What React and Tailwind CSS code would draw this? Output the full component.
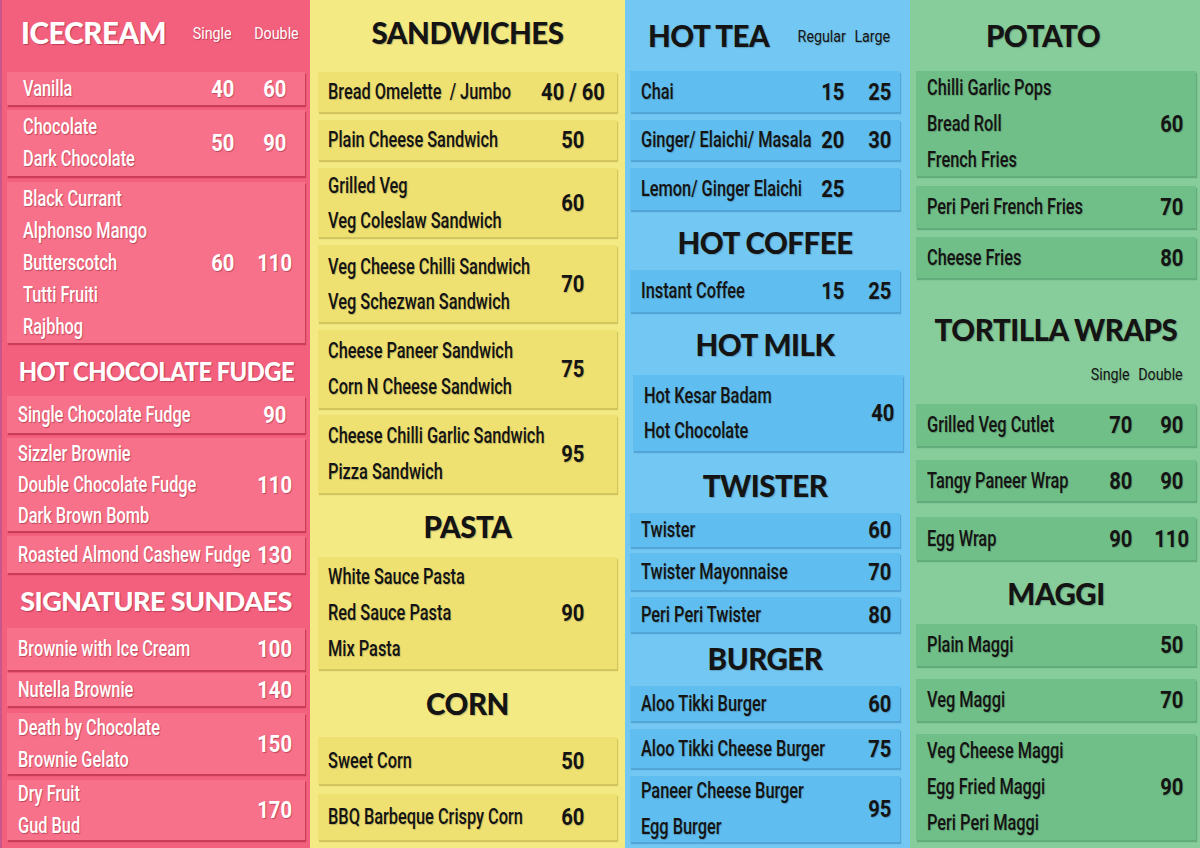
const NARROW = "font-['Roboto','Liberation_Sans',sans-serif]";
const SQUEEZE = 'scale-x-[0.84]';
const ITEM_SQUEEZE = 'scale-x-[0.76]';
const HEAD = "font-['Lato','Open_Sans',sans-serif] font-black";

const COLS = [
  {
    wrap: 'bg-[#f2607d] pl-[5px] pr-[5px] border-l-2 border-[#c8568a]',
    box: 'bg-[#f7718a] shadow-[1px_2px_1px_rgba(150,20,50,0.45)]',
    ink: 'text-white [text-shadow:1px_1px_1px_rgba(120,20,40,0.45)]',
    pl: 'pl-[11px]',
    prices: 'gap-[12px] pr-[10px]',
    cell: 'w-[40px]',
    items: [
      { kind: 'lead', title: 'ICECREAM', subs: ['Single', 'Double'], cls: 'h-[72px] pb-[6px] pl-[14px] pr-[1px]', subCls: 'gap-[8px]', subCell: 'w-[56px]' },
      { lines: ['Vanilla'], prices: ['40', '60'], cls: 'h-[33px]', pl: 'pl-[16px]' },
      { lines: ['Chocolate', 'Dark Chocolate'], prices: ['50', '90'], cls: 'mt-[5px] h-[66px]', pl: 'pl-[16px]' },
      { lines: ['Black Currant', 'Alphonso Mango', 'Butterscotch', 'Tutti Fruiti', 'Rajbhog'], prices: ['60', '110'], cls: 'mt-[6px] h-[161px]', pl: 'pl-[16px]' },
      { kind: 'head', title: 'HOT CHOCOLATE FUDGE', cls: 'h-[53px] pt-[3px]', size: 'text-[27px] tracking-[-0.6px] scale-x-[0.88]' },
      { lines: ['Single Chocolate Fudge'], prices: ['90'], cls: 'h-[37px]' },
      { lines: ['Sizzler Brownie', 'Double Chocolate Fudge', 'Dark Brown Bomb'], prices: ['110'], cls: 'mt-[5px] h-[93px]', lh: 'leading-[31px]' },
      { lines: ['Roasted Almond Cashew Fudge'], prices: ['130'], cls: 'mt-[5px] h-[37px]' },
      { kind: 'head', title: 'SIGNATURE SUNDAES', cls: 'h-[55px]', size: 'text-[27px] tracking-[-0.6px]' },
      { lines: ['Brownie with Ice Cream'], prices: ['100'], cls: 'h-[42px]' },
      { lines: ['Nutella Brownie'], prices: ['140'], cls: 'mt-[3px] h-[33px]' },
      { lines: ['Death by Chocolate', 'Brownie Gelato'], prices: ['150'], cls: 'mt-[7px] h-[61px]' },
      { lines: ['Dry Fruit', 'Gud Bud'], prices: ['170'], cls: 'mt-[6px] h-[60px]' },
    ],
  },
  {
    wrap: 'bg-[#f4ea84] px-[8px]',
    box: 'bg-[#eee172] shadow-[1px_2px_1px_rgba(150,130,20,0.35)]',
    ink: 'text-[#141414] [text-shadow:1px_1px_1px_rgba(0,0,0,0.2)]',
    pl: 'pl-[10px]',
    prices: 'pr-[9px]',
    cell: 'w-[70px]',
    items: [
      { kind: 'head', title: 'SANDWICHES', cls: 'h-[72px] pb-[6px]' },
      { lines: ['Bread Omelette\u00a0 / Jumbo'], prices: ['40 / 60'], cls: 'h-[40px]' },
      { lines: ['Plain Cheese Sandwich'], prices: ['50'], cls: 'mt-[8px] h-[40px]' },
      { lines: ['Grilled Veg', 'Veg Coleslaw Sandwich'], prices: ['60'], cls: 'mt-[8px] h-[69px]', lh: 'leading-[35px]' },
      { lines: ['Veg Cheese Chilli Sandwich', 'Veg Schezwan Sandwich'], prices: ['70'], cls: 'mt-[8px] h-[77px]', lh: 'leading-[35px]' },
      { lines: ['Cheese Paneer Sandwich', 'Corn N Cheese Sandwich'], prices: ['75'], cls: 'mt-[8px] h-[78px]', lh: 'leading-[36px]' },
      { lines: ['Cheese Chilli Garlic Sandwich', 'Pizza Sandwich'], prices: ['95'], cls: 'mt-[7px] h-[78px]', lh: 'leading-[36px]' },
      { kind: 'head', title: 'PASTA', cls: 'h-[64px] pt-[4px]' },
      { lines: ['White Sauce Pasta', 'Red Sauce Pasta', 'Mix Pasta'], prices: ['90'], cls: 'h-[112px]', lh: 'leading-[36px]' },
      { kind: 'head', title: 'CORN', cls: 'h-[68px] pt-[2px]' },
      { lines: ['Sweet Corn'], prices: ['50'], cls: 'h-[47px]' },
      { lines: ['BBQ Barbeque Crispy Corn'], prices: ['60'], cls: 'mt-[10px] h-[46px]' },
    ],
  },
  {
    wrap: 'bg-[#73c8f3] pl-[5px] pr-[10px]',
    box: 'bg-[#5fbdef] shadow-[1px_2px_1px_rgba(20,100,160,0.35)]',
    ink: 'text-[#141414] [text-shadow:1px_1px_1px_rgba(0,0,0,0.2)]',
    pl: 'pl-[11px]',
    prices: 'gap-[11px] pr-[2px]',
    cell: 'w-[36px]',
    items: [
      { kind: 'lead', title: 'HOT TEA', subs: ['Regular', 'Large'], cls: 'h-[71px] pl-[18px] pr-[3px]', subCls: 'gap-0', subCell: 'w-[50px]' },
      { lines: ['Chai'], prices: ['15', '25'], cls: 'h-[41px]' },
      { lines: ['Ginger/ Elaichi/ Masala'], prices: ['20', '30'], cls: 'mt-[8px] h-[40px]' },
      { lines: ['Lemon/ Ginger Elaichi'], prices: ['25', ''], cls: 'mt-[8px] h-[42px]' },
      { kind: 'head', title: 'HOT COFFEE', cls: 'h-[60px] pt-[6px]' },
      { lines: ['Instant Coffee'], prices: ['15', '25'], cls: 'h-[42px]' },
      { kind: 'head', title: 'HOT MILK', cls: 'h-[63px] pt-[3px]' },
      { lines: ['Hot Kesar Badam', 'Hot Chocolate'], prices: ['40'], cls: 'h-[76px] ml-[3px] -mr-[3px]', lh: 'leading-[35px]' },
      { kind: 'head', title: 'TWISTER', cls: 'h-[62px] pt-[8px]' },
      { lines: ['Twister'], prices: ['60'], cls: 'h-[34px]' },
      { lines: ['Twister Mayonnaise'], prices: ['70'], cls: 'mt-[6px] h-[37px]' },
      { lines: ['Peri Peri Twister'], prices: ['80'], cls: 'mt-[7px] h-[35px]' },
      { kind: 'head', title: 'BURGER', cls: 'h-[54px]' },
      { lines: ['Aloo Tikki Burger'], prices: ['60'], cls: 'h-[35px]' },
      { lines: ['Aloo Tikki Cheese Burger'], prices: ['75'], cls: 'mt-[8px] h-[39px]' },
      { lines: ['Paneer Cheese Burger', 'Egg Burger'], prices: ['95'], cls: 'mt-[8px] h-[66px]', lh: 'leading-[36px]' },
    ],
  },
  {
    wrap: 'bg-[#87cd9c] pl-[6px] pr-[4px]',
    box: 'bg-[#70bf89] shadow-[1px_2px_1px_rgba(30,110,60,0.35)]',
    ink: 'text-[#141414] [text-shadow:1px_1px_1px_rgba(0,0,0,0.2)]',
    pl: 'pl-[11px]',
    prices: 'gap-[11px] pr-[4px]',
    cell: 'w-[40px]',
    items: [
      { kind: 'head', title: 'POTATO', cls: 'h-[71px] pr-[26px]' },
      { lines: ['Chilli Garlic Pops', 'Bread Roll', 'French Fries'], prices: ['60'], cls: 'h-[105px]', lh: 'leading-[36px]' },
      { lines: ['Peri Peri French Fries'], prices: ['70'], cls: 'mt-[10px] h-[42px]' },
      { lines: ['Cheese Fries'], prices: ['80'], cls: 'mt-[9px] h-[41px]' },
      { kind: 'wraps', title: 'TORTILLA WRAPS', subs: ['Single', 'Double'] },
      { lines: ['Grilled Veg Cutlet'], prices: ['70', '90'], cls: 'h-[42px]' },
      { lines: ['Tangy Paneer Wrap'], prices: ['80', '90'], cls: 'mt-[14px] h-[41px]' },
      { lines: ['Egg Wrap'], prices: ['90', '110'], cls: 'mt-[16px] h-[43px]' },
      { kind: 'head', title: 'MAGGI', cls: 'h-[64px] pt-[4px]' },
      { lines: ['Plain Maggi'], prices: ['50'], cls: 'h-[42px]' },
      { lines: ['Veg Maggi'], prices: ['70'], cls: 'mt-[13px] h-[42px]' },
      { lines: ['Veg Cheese Maggi', 'Egg Fried Maggi', 'Peri Peri Maggi'], prices: ['90'], cls: 'mt-[13px] h-[106px]', lh: 'leading-[36px]' },
    ],
  },
];

function Heading({ children, col, size }) {
  return (
    <div className={`${HEAD} ${col.ink} ${size || 'text-[29.5px] tracking-[-0.5px]'} leading-[40px] whitespace-nowrap`}>
      {children}
    </div>
  );
}

function Subs({ subs, cell, cls, col }) {
  return (
    <div className={`flex ${cls} ${NARROW} ${col.ink} text-[17px] leading-[20px]`}>
      {subs.map((s) => (
        <span key={s} className={`${cell} flex justify-center`}>
          <span className={`inline-block ${SQUEEZE}`}>{s}</span>
        </span>
      ))}
    </div>
  );
}

function Row({ row, col }) {
  const two = row.prices.length === 2;
  return (
    <div className={`flex items-center ${col.box} ${row.cls}`}>
      <div className={`flex-1 min-w-0 ${row.pl || col.pl} ${NARROW} font-medium ${col.ink} text-[21.5px] whitespace-nowrap`}>
        {row.lines.map((l) => (
          <div key={l} className={`origin-left ${ITEM_SQUEEZE} ${row.lh || 'leading-[32px]'}`}>{l}</div>
        ))}
      </div>
      <div className={`flex ${two ? col.prices : col.prices.replace(/gap-\S+/, '')} ${NARROW} ${col.ink} text-[24px] font-bold leading-[30px]`}>
        {row.prices.map((p, i) => (
          <span key={i} className={`${col.cell} flex justify-center whitespace-nowrap`}>
            <span className={`inline-block ${SQUEEZE}`}>{p}</span>
          </span>
        ))}
      </div>
    </div>
  );
}

function Item({ item, col }) {
  if (item.kind === 'lead') {
    return (
      <div className={`flex items-center justify-between ${item.cls}`}>
        <Heading col={col}>{item.title}</Heading>
        <Subs subs={item.subs} cell={item.subCell} cls={item.subCls} col={col} />
      </div>
    );
  }
  if (item.kind === 'head') {
    return (
      <div className={`flex items-center justify-center ${item.cls}`}>
        <Heading col={col} size={item.size}>{item.title}</Heading>
      </div>
    );
  }
  if (item.kind === 'wraps') {
    return (
      <div className="flex flex-col h-[126px]">
        <div className="mt-[32px] flex justify-center">
          <Heading col={col}>{item.title}</Heading>
        </div>
        <div className="mt-[14px] flex justify-end pr-[12px]">
          <Subs subs={item.subs} cell="w-[48px]" cls="gap-[2px]" col={col} />
        </div>
      </div>
    );
  }
  return <Row row={item} col={col} />;
}

export default function App() {
  return (
    <div className="w-[1200px] h-[848px] overflow-hidden grid grid-cols-[310px_315px_285px_290px]">
      {COLS.map((col, i) => (
        <div key={i} className={`flex flex-col h-[848px] ${col.wrap}`}>
          {col.items.map((item, j) => (
            <Item key={j} item={item} col={col} />
          ))}
        </div>
      ))}
    </div>
  );
}
